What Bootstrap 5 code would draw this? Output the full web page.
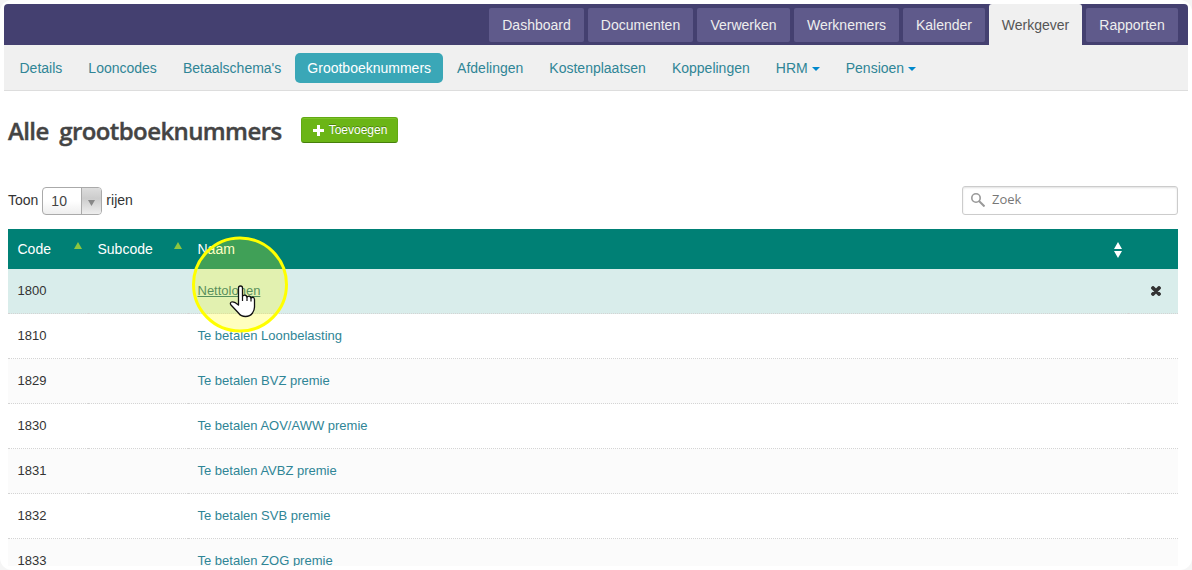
<!DOCTYPE html>
<html lang="nl">
<head>
<meta charset="utf-8">
<title>Alle grootboeknummers</title>
<link href="https://cdn.jsdelivr.net/npm/bootstrap@5.3.0/dist/css/bootstrap.min.css" rel="stylesheet">
<style>
html{background:#f5f5f5}
body{font-family:"Liberation Sans",Arial,sans-serif;font-size:14px;line-height:20px;color:#333;background:transparent;height:570px;overflow:hidden}
.page-shell{height:570px;background:#fff;border-radius:12px;padding:4px 4px 4px;overflow:hidden}
.page-view{height:562px;overflow:hidden;border-radius:4px 4px 0 0}
.main-tabs{height:41px;background:#444070;gap:4px;padding:0 10px 0 485px}
.main-tabs .nav-link{height:34px;margin-top:4px;padding:7px 0;text-align:center;background:#5f5a8b;color:#eee;border-radius:2px}
.main-tabs .nav-link.active{height:41px;margin-top:0;padding-top:11px;background:#f0f0f0;color:#555;border-radius:3px 3px 0 0}
.sub-tabs{height:46px;background:#f0f0f0;border-bottom:1px solid #ddd;padding:8px 0 0 3.5px}
.sub-tabs .nav-link{height:30px;padding:5px 12px;margin-right:2.050px;color:#2f8596;border-radius:5px;white-space:nowrap}
.sub-tabs .nav-link.active{background:#3aa7b7;color:#fff}
.down{display:inline-block;border:4px solid transparent;border-top-color:#0088cc;border-bottom:0;margin-left:4px;vertical-align:2px}
.title-row{padding:24px 4px 0;height:68px}
h1{font-family:"Open Sans",sans-serif;font-size:24px;font-weight:600;line-height:32px;color:#444;margin:0;width:273px;white-space:nowrap;letter-spacing:-.6px;word-spacing:5px;-webkit-text-stroke:.4px #444}
.btn-add{width:97px;height:26px;margin:2px 0 0 20px;padding:0 0 1px;font-size:12px;line-height:22px;color:#fff;background:#6bb516;border:1px solid #62a913;border-bottom-color:#467f0b;border-radius:3px;box-shadow:inset 0 1px #7cc427;text-shadow:0 -1px rgba(0,0,0,.3)}
.btn-add svg{margin:1px 5px 0 1px}
.tools{padding:28px 10px 0 4px;height:70px}
.pick{width:60px;height:28px;margin:0 4px;border:1px solid #aaa;border-radius:4px;background:linear-gradient(#fff 50%,#eee);overflow:hidden;color:#444}
.pick-value{padding:3px 0 0 8px}
.pick-arrow{width:20px;border-left:1px solid #aaa;background:linear-gradient(#ddd,#ccc 40%,#eee);padding:12px 0 0 6px}
.pick-arrow svg{display:block}
.search{width:216px;height:29px;margin-top:-1px;border:1px solid #ccc;border-radius:3px;box-shadow:inset 0 1px 2px rgba(0,0,0,.12);font:13px/25px "Open Sans",sans-serif;color:#777;padding:0 0 2px 8px}
.ledger{width:1170px;margin:0 4px;table-layout:fixed;border-collapse:separate;border-spacing:0}
.ledger th{height:40px;padding:0 10px 0 9.5px;background:#008075;color:#fff;font-weight:400;vertical-align:middle}
.ledger th svg{margin-right:-4px}
.ledger td{height:45px;padding:0 10px 1px 9.5px;border-bottom:1px dotted #d4d4d4;vertical-align:middle;font-size:13px}
.ledger tr:nth-child(odd) td{background:#fbfbfb}
.ledger tr:nth-child(even) td{background:#fff}
.ledger tbody tr:first-child td{background:#d9edeb}
.ledger a{color:#2f8596;text-decoration:none}
.ledger tr:first-child a{text-decoration:underline;color:#1d6a7c}
.click-spot{position:absolute;left:191px;top:236px;pointer-events:none}
.click-spot svg{display:block}
</style>
</head>
<body>
<div class="page-shell"><div class="page-view">
<nav class="nav main-tabs flex-nowrap">
<a class="nav-link" style="width:95px">Dashboard</a><a class="nav-link" style="width:105px">Documenten</a><a class="nav-link" style="width:93px">Verwerken</a><a class="nav-link" style="width:105px">Werknemers</a><a class="nav-link" style="width:82px">Kalender</a><a class="nav-link active" style="width:93px">Werkgever</a><a class="nav-link" style="width:92px">Rapporten</a>
</nav>
<nav class="nav sub-tabs flex-nowrap">
<a class="nav-link">Details</a><a class="nav-link">Looncodes</a><a class="nav-link">Betaalschema's</a><a class="nav-link active">Grootboeknummers</a><a class="nav-link">Afdelingen</a><a class="nav-link">Kostenplaatsen</a><a class="nav-link">Koppelingen</a><a class="nav-link">HRM<span class="down"></span></a><a class="nav-link">Pensioen<span class="down"></span></a>
</nav>
<header class="title-row d-flex align-items-start">
<h1>Alle grootboeknummers</h1>
<button class="btn btn-add d-flex align-items-center justify-content-center"><svg width="11" height="11" viewBox="0 0 11 11"><path d="M4 0h3v4h4v3H7v4H4V7H0V4h4z" fill="#fff"/></svg>Toevoegen</button>
</header>
<div class="tools d-flex justify-content-between align-items-start">
<div class="d-flex align-items-start"><span class="pt-1" style="line-height:18px">Toon</span><div class="pick d-flex justify-content-between"><span class="pick-value">10</span><span class="pick-arrow"><svg width="7" height="6"><path d="M0 0h7L3.500 6z" fill="#888"/></svg></span></div><span class="pt-1" style="line-height:18px">rijen</span></div>
<div class="search d-flex align-items-center"><svg style="margin:1px 7px 0 0" width="14" height="14" viewBox="0 0 14 14" fill="none" stroke="#999"><circle cx="5" cy="5" r="4.200" stroke-width="1.600"/><path d="M8 8l5.500 5.500" stroke-width="2"/></svg>Zoek</div>
</div>
<table class="ledger">
<colgroup><col style="width:80px"><col style="width:100px"><col style="width:940px"><col style="width:50px"></colgroup>
<thead><tr>
<th><div class="d-flex justify-content-between">Code<svg width="8" height="7" style="margin-top:3px"><path d="M4 0l4 7H0z" fill="#8cc63f"/></svg></div></th>
<th><div class="d-flex justify-content-between">Subcode<svg width="8" height="7" style="margin-top:3px"><path d="M4 0l4 7H0z" fill="#8cc63f"/></svg></div></th>
<th><div class="d-flex justify-content-between align-items-center">Naam<svg width="8" height="16" style="margin-top:2px"><path d="M4 0l4 7H0zM0 9h8l-4 7z" fill="#fff"/></svg></div></th>
<th></th></tr></thead>
<tbody>
<tr><td>1800</td><td></td><td><a href="#">Nettolonen</a></td><td><svg class="d-block ms-auto" style="margin-right:7px" width="10" height="10" viewBox="0 0 10 10"><path d="M2 2l6 6M8 2L2 8" stroke="#333" stroke-width="3.800" stroke-linecap="round"/></svg></td></tr>
<tr><td>1810</td><td></td><td><a href="#">Te betalen Loonbelasting</a></td><td></td></tr>
<tr><td>1829</td><td></td><td><a href="#">Te betalen BVZ premie</a></td><td></td></tr>
<tr><td>1830</td><td></td><td><a href="#">Te betalen AOV/AWW premie</a></td><td></td></tr>
<tr><td>1831</td><td></td><td><a href="#">Te betalen AVBZ premie</a></td><td></td></tr>
<tr><td>1832</td><td></td><td><a href="#">Te betalen SVB premie</a></td><td></td></tr>
<tr><td>1833</td><td></td><td><a href="#">Te betalen ZOG premie</a></td><td></td></tr>
</tbody>
</table>
</div></div>
<div class="click-spot"><svg width="98" height="98" viewBox="0 0 98 98"><circle cx="49" cy="48.500" r="46.500" fill="#ffff00" fill-opacity=".25" stroke="#ff0" stroke-width="3"/>
<path d="M47.500 65.500V52Q47.500 50 49.500 50T51.500 52V60Q55 58 56 61Q59 59 60 62Q63 60 63.500 63.500V71Q63.500 74 61.500 77Q59 80.500 54.500 80.500Q50 80.500 47.500 77L40 69Q38.500 67 40.500 66Q43 65 47.500 69Z" fill="#fff" stroke="#111" stroke-width="1.300" stroke-linejoin="round"/><path d="M51.500 60v5M56 61v4M60 62v3.500" stroke="#111" stroke-width="1.200"/></svg></div>
<script src="https://cdn.jsdelivr.net/npm/bootstrap@5.3.0/dist/js/bootstrap.bundle.min.js"></script>
</body>
</html>
